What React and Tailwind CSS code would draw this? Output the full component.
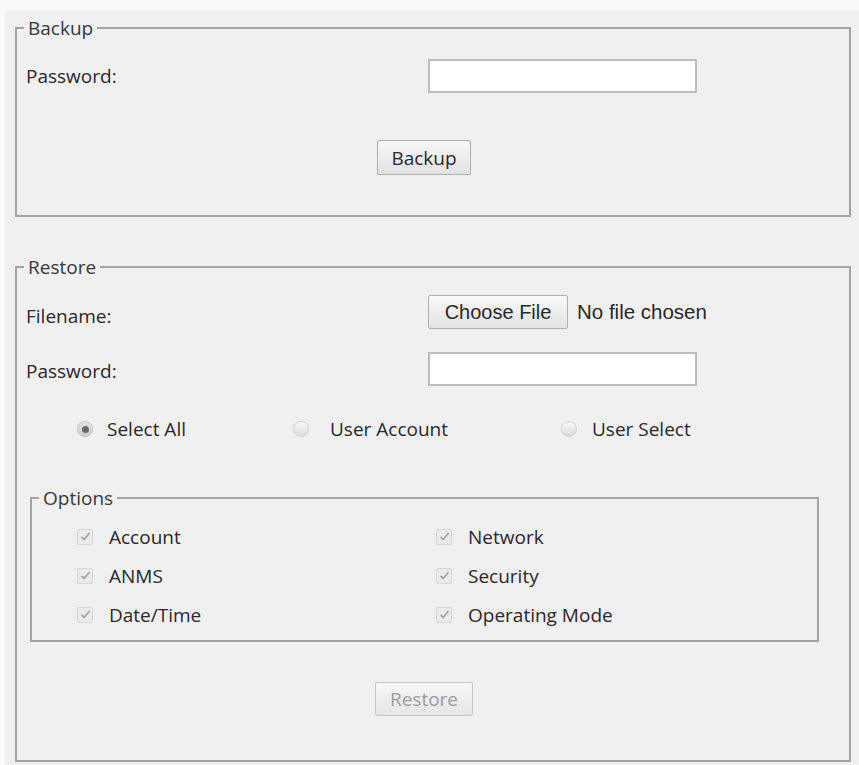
import React from "react";

const font = { fontFamily: '"Open Sans", "Noto Sans", sans-serif' };

function Radio({ checked }) {
  return (
    <span
      className={
        "flex h-[16px] w-[16px] shrink-0 items-center justify-center rounded-full border " +
        (checked
          ? "border-[#c2c2c2] bg-gradient-to-b from-[#e4e4e4] to-[#cfcfcf]"
          : "border-[#d2d2d2] bg-gradient-to-b from-[#fbfbfb] to-[#dadada]")
      }
    >
      {checked && <span className="h-[7px] w-[7px] rounded-full bg-[#6a6a6a]" />}
    </span>
  );
}

function Check({ label }) {
  return (
    <div className="flex h-[39px] items-center">
      <span className="flex h-[16px] w-[16px] shrink-0 items-center justify-center rounded-[2px] border border-[#d6d6d6] bg-[#ebebeb]">
        <svg width="11" height="11" viewBox="0 0 11 11">
          <path d="M1.5 5.8 L4.2 8.5 L9.5 2" fill="none" stroke="#a5a5a5" strokeWidth="1.8" />
        </svg>
      </span>
      <span className="ml-[16px] text-[19px] text-[#2a262c]">{label}</span>
    </div>
  );
}

export default function App() {
  return (
    <div className="min-h-[765px] w-[859px] bg-[#f9f9f9] pl-[5px] pt-[10px]" style={font}>
      <div className="min-h-[755px] bg-[#f0f0f0] pl-[10px] pr-[8px] pt-[5px] leading-[26px] text-[19px] text-[#2a262c]">
        {/* Backup */}
        <fieldset className="border-2 border-[#a3a3a3] pb-[40px]">
          <legend className="ml-[7px] px-[4px] text-[#3b3640]">Backup</legend>
          <div className="mt-[18px] flex items-center pl-[9px]">
            <span className="w-[402px]">Password:</span>
            <input
              type="password"
              className="h-[34px] w-[269px] border-2 border-[#bdbdbd] bg-white outline-none"
            />
          </div>
          <div className="mt-[47px] pl-[360px]">
            <button className="h-[35px] w-[94px] rounded-[2px] border border-[#adadad] bg-gradient-to-b from-[#f8f8f8] to-[#e2e2e2] text-[19px] text-[#2a262c]">
              Backup
            </button>
          </div>
        </fieldset>

        {/* Restore */}
        <fieldset className="mt-[37px] border-2 border-[#a3a3a3] pb-[44px]">
          <legend className="ml-[7px] px-[4px] text-[#3b3640]">Restore</legend>
          <div className="mt-[15px] flex items-center pl-[9px]">
            <span className="w-[402px] pt-[8px]">Filename:</span>
            <button
              className="h-[34px] w-[140px] rounded-[2px] border border-[#b0b0b0] bg-gradient-to-b from-[#f9f9f9] to-[#e3e3e3] text-[20px] text-[#2a262c]"
              style={{ fontFamily: '"Liberation Sans", Arial, sans-serif' }}
            >
              Choose File
            </button>
            <span
              className="ml-[9px] text-[20.5px] text-[#2a262c]"
              style={{ fontFamily: '"Liberation Sans", Arial, sans-serif' }}
            >
              No file chosen
            </span>
          </div>
          <div className="mt-[23px] flex items-center pl-[9px]">
            <span className="w-[402px] pt-[4px]">Password:</span>
            <input
              type="password"
              className="h-[34px] w-[269px] border-2 border-[#bdbdbd] bg-white outline-none"
            />
          </div>
          <div className="mt-[30px] flex h-[26px] items-center pl-[60px]">
            <div className="flex w-[216px] items-center">
              <Radio checked />
              <span className="ml-[14px]">Select All</span>
            </div>
            <div className="flex w-[268px] items-center">
              <Radio />
              <span className="ml-[21px]">User Account</span>
            </div>
            <div className="flex items-center">
              <Radio />
              <span className="ml-[15px]">User Select</span>
            </div>
          </div>

          {/* Options */}
          <fieldset className="ml-[13px] mr-[30px] mt-[43px] border-2 border-[#a3a3a3] pb-[6px]">
            <legend className="ml-[7px] px-[4px] text-[#3b3640]">Options</legend>
            <div className="mt-[6px] grid grid-cols-[359px_1fr] pl-[45px]">
              <div>
                <Check label="Account" />
                <Check label="ANMS" />
                <Check label="Date/Time" />
              </div>
              <div>
                <Check label="Network" />
                <Check label="Security" />
                <Check label="Operating Mode" />
              </div>
            </div>
          </fieldset>

          <div className="mt-[40px] pl-[358px]">
            <button
              disabled
              className="h-[34px] w-[98px] rounded-[2px] border border-[#c4c4c4] bg-gradient-to-b from-[#f7f7f7] to-[#e6e6e6] text-[19px] text-[#9c9c9c]"
            >
              Restore
            </button>
          </div>
        </fieldset>
      </div>
    </div>
  );
}
